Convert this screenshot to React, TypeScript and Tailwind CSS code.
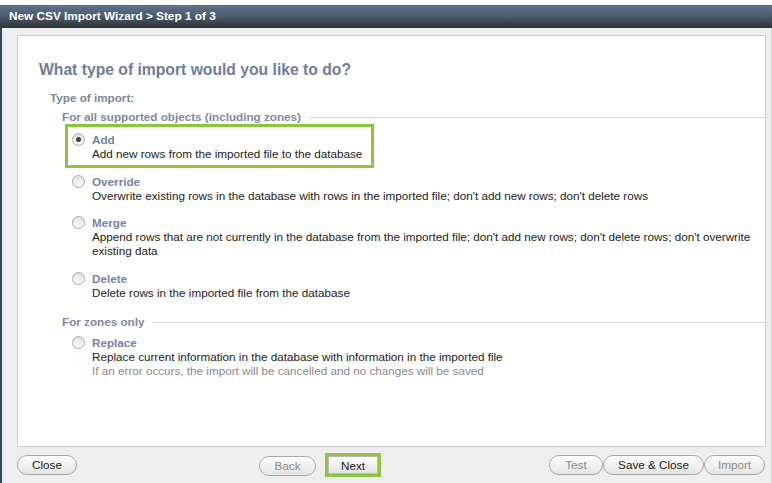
import type { ReactNode } from 'react'

const font = { fontFamily: '"Liberation Sans", Arial, sans-serif' }

function Radio({ checked }: { checked?: boolean }) {
  return (
    <span className="w-[13px] h-[13px] rounded-full border border-[#a9a9a9] bg-gradient-to-b from-[#e2e2e2] to-[#fafafa] flex items-center justify-center shrink-0">
      {checked && <span className="w-[5px] h-[5px] rounded-full bg-[#444]" />}
    </span>
  )
}

function Option({ label, checked, children }: { label: string; checked?: boolean; children: ReactNode }) {
  return (
    <div className="flex gap-[7px]">
      <div className="pt-[1px]"><Radio checked={checked} /></div>
      <div className="text-[11.7px] whitespace-nowrap">
        <div className="font-bold text-[#7483a0] leading-[15px]">{label}</div>
        <div className="text-[#222] leading-[14px]">{children}</div>
      </div>
    </div>
  )
}

function Legend({ text }: { text: string }) {
  return (
    <div className="flex items-center gap-[9px] pl-[44px] h-[14px]">
      <span className="font-bold text-[11.7px] text-[#7f8a9c] whitespace-nowrap">{text}</span>
      <span className="flex-1 h-px bg-[#d6d6d6]" />
    </div>
  )
}

function Btn({ children, disabled, w }: { children: ReactNode; disabled?: boolean; w: string }) {
  return (
    <button
      className={`${w} h-[20px] rounded-full border border-[#a8a8a8] bg-gradient-to-b from-[#fdfdfd] to-[#e4e4e4] text-[11.7px] ${disabled ? 'text-[#8a8a8a]' : 'text-[#222]'}`}
    >
      {children}
    </button>
  )
}

export default function App() {
  return (
    <div className="w-[772px] h-[483px] bg-white pt-[5px] flex flex-col overflow-hidden" style={font}>
      {/* title bar */}
      <div className="h-[23px] shrink-0 bg-gradient-to-b from-[#5d728c] via-[#4c5b6e] to-[#2f3333] flex items-center pl-[9px]">
        <span className="text-white font-bold text-[11.8px]">New CSV Import Wizard &gt; Step 1 of 3</span>
      </div>

      <div className="flex-1 flex border-l-[2px] border-[#34466a]">
        <div className="flex-1 bg-[#eeeeee] flex flex-col pl-[15px] pr-[5px] pt-[7px] border-r border-[#d6d6d6]">
          {/* panel */}
          <div className="h-[412px] shrink-0 bg-white border border-[#cfcfcf] pt-[25px]">
            <div className="pl-[21px] text-[15.7px] leading-[18px] font-bold text-[#6e7e98]">What type of import would you like to do?</div>
            <div className="pl-[32px] mt-[12px] text-[11.7px] leading-[14px] font-bold text-[#7b8696]">Type of import:</div>

            <div className="mt-[5px]">
              <Legend text="For all supported objects (including zones)" />
            </div>

            <div className="pl-[47px]">
              <div className="w-[309px] h-[44px] border-[3px] border-[#8cc540] pl-[4px] pt-[5px]">
                <Option label="Add" checked>Add new rows from the imported file to the database</Option>
              </div>
            </div>

            <div className="pl-[54px] mt-[6px] flex flex-col gap-[12px]">
              <Option label="Override">
                Overwrite existing rows in the database with rows in the imported file; don't add new rows; don't delete rows
              </Option>
              <Option label="Merge">
                Append rows that are not currently in the database from the imported file; don't add new rows; don't delete rows; don't overwrite
                <br />existing data
              </Option>
              <div className="mt-[1px]">
                <Option label="Delete">Delete rows in the imported file from the database</Option>
              </div>
            </div>

            <div className="mt-[15px]">
              <Legend text="For zones only" />
            </div>

            <div className="pl-[54px] mt-[6px]">
              <Option label="Replace">
                Replace current information in the database with information in the imported file
                <br />
                <span className="text-[#8a8a8a]">If an error occurs, the import will be cancelled and no changes will be saved</span>
              </Option>
            </div>
          </div>

          {/* buttons */}
          <div className="flex items-center mt-[6px]">
            <Btn w="w-[60px]">Close</Btn>
            <div className="ml-[182px]">
              <Btn w="w-[57px]" disabled>Back</Btn>
            </div>
            <div className="ml-[9px] border-[3px] border-[#8cc540] bg-[#eeeeee]">
              <button className="block w-[50px] h-[18px] bg-gradient-to-b from-[#fdfdfd] to-[#e4e4e4] border border-[#b8b8b8] text-[11.7px] text-[#222]">Next</button>
            </div>
            <div className="ml-auto flex mr-[1px]">
              <Btn w="w-[54px]" disabled>Test</Btn>
              <Btn w="w-[101px]">Save &amp; Close</Btn>
              <Btn w="w-[61px]" disabled>Import</Btn>
            </div>
          </div>
        </div>
      </div>
    </div>
  )
}
